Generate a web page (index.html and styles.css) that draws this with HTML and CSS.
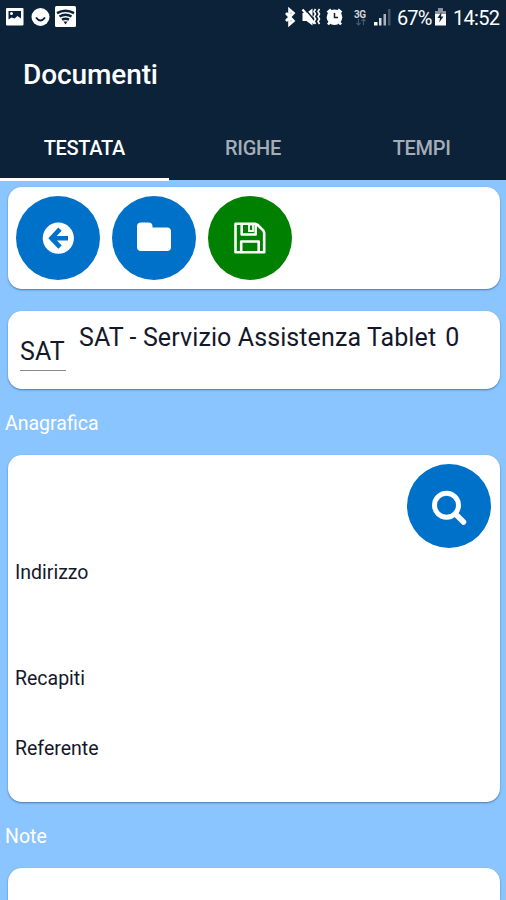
FILE: index.html
```html
<!DOCTYPE html>
<html lang="it">
    <head>
        <meta charset="utf-8">
        <title>Documenti</title>
        <link rel="stylesheet" href="styles.css">
    </head>
    <body>
        <div class="header">
            <!-- barra di stato -->
            <div class="status">
                <svg class="status-left" width="80" height="34" viewBox="0 0 80 34">
                    <path fill="#fff" fill-rule="evenodd" d="M8 8h14.500q1 0 1 1v15.500q0 1-1 1H7q-1 0-1-1V9q0-1 1-1zM8.500 11v8.500l3-2 3 1 3-2.500 3.500 2.500V11z"/>
                    <circle cx="11.500" cy="13.500" r="1.500" fill="#fff"/>
                    <circle cx="40.500" cy="17" r="9" fill="#fff"/>
                    <path d="M36 17.500q4.500 6 9 0" fill="none" stroke="#0b2239" stroke-width="2"/>
                    <rect x="55" y="6" width="21" height="21" rx="1.500" fill="#fff"/>
                    <g fill="none" stroke="#0b2239" stroke-width="2.500">
                        <path d="M57 13.200q8.500-5 17 0"/>
                        <path d="M59.500 16.500q6-3.500 12 0"/>
                        <path d="M62 19.700q3.500-2 7 0"/>
                    </g>
                    <path d="M63.500 21.500h4l-2 3z" fill="#0b2239"/>
                </svg>
                <svg width="112" height="34" viewBox="282 0 112 34">
                    <path d="M287 13l7.500 8-4 3.500v-15l4 3.500-7.500 8" fill="none" stroke="#fff" stroke-width="2.600"/>
                    <path d="M303.500 13h4l6-4.500v17l-6-4.500h-4z" fill="#fff"/>
                    <path d="M305.500 8.500l12 14" stroke="#0b2239" stroke-width="1.500"/>
                    <path d="M303.500 9.500l12 14" stroke="#fff" stroke-width="2.300"/>
                    <path d="M316.500 9l-1.500 2.500 1.500 2.500-1.500 2.500 1.500 2.500-1.500 2.500 1.500 2.500M320.500 9l-1.500 2.500 1.500 2.500-1.500 2.500 1.500 2.500-1.500 2.500 1.500 2.500" fill="none" stroke="#fff" stroke-width="1.600"/>
                    <circle cx="335.500" cy="17.200" r="7.800" fill="#fff"/>
                    <path d="M328.500 12.500l3.500-3M342.500 12.500l-3.500-3M331 22l-2 2.500M340 22l2 2.500" stroke="#fff" stroke-width="2.600"/>
                    <path d="M335.500 13v4.500h3.500" fill="none" stroke="#0b2239" stroke-width="1.500"/>
                    <text x="355" y="17.500" class="net">3G</text>
                    <path d="M359.500 19v6m-2-2l2 2 2-2M364.500 25v-6m-2 2l2-2 2 2" fill="none" stroke="#4b5a6b" stroke-width="1.200"/>
                    <path d="M375 22h3.500v3.500H375z" fill="#fff"/>
                    <path d="M380 18h2.500v7.500H380z" fill="#d5d9de"/>
                    <path d="M384.500 14h2.500v11.500h-2.500z" fill="#aab2bb"/>
                    <path d="M389 9h2.500v16.500H389z" fill="#43566a"/>
                </svg>
                <span class="percent">67%</span>
                <svg class="battery" width="13" height="34" viewBox="0 0 13 34">
                    <path d="M1 11h3V8.500h5V11h3v14.500H1z" fill="#fff"/>
                    <path d="M1 11h3V8.500h5V11h3v3H1z" fill="#8b96a2"/>
                    <path d="M7.500 12l-4 6H6l-.8 4.500 4.300-6H7z" fill="#0b2239"/>
                </svg>
                <span class="clock">14:52</span>
            </div>
            <h1>Documenti</h1>
            <div class="tabs">
                <a class="tab active">TESTATA</a>
                <a class="tab">RIGHE</a>
                <a class="tab">TEMPI</a>
            </div>
        </div>

        <div class="content">
            <div class="card toolbar">
                <button class="round">
                    <svg width="84" height="84" viewBox="0 0 84 84">
                        <circle cx="42.300" cy="42.200" r="15.600" fill="#fff"/>
                        <path d="M52 42.200H36M44 33.200l-8.500 9 8.500 9" fill="none" stroke="#0071c8" stroke-width="4.600"/>
                    </svg>
                </button>
                <button class="round">
                    <svg width="84" height="84" viewBox="0 0 84 84">
                        <path d="M29 26.500h7.500q4 0 4 4v1h14.500q4 0 4 4v15.500q0 4-4 4H29q-4 0-4-4V30.500q0-4 4-4z" fill="#fff"/>
                    </svg>
                </button>
                <button class="round save">
                    <svg width="84" height="84" viewBox="0 0 84 84">
                        <path d="M27.500 27.800h19.500q1.500 0 2.700 1.200l5.200 5.200q1.300 1.300 1.300 3V56.200H27.500zM33.200 56V45.500h17.500V56M33.700 28v10.500h14v-10.500" fill="none" stroke="#fff" stroke-width="2.600" stroke-linejoin="round"/>
                        <path d="M41 28.500h4v6.500h-4z" fill="none" stroke="#fff" stroke-width="1.800"/>
                    </svg>
                </button>
            </div>

            <div class="card doc">
                <span class="doc-code">SAT</span>
                <span class="doc-name">SAT - Servizio Assistenza Tablet</span>
                <span class="doc-number">0</span>
            </div>

            <div class="section">Anagrafica</div>
            <div class="card customer">
                <button class="round search">
                    <svg width="84" height="84" viewBox="0 0 84 84">
                        <circle cx="39.500" cy="41.200" r="12" fill="none" stroke="#fff" stroke-width="5"/>
                        <path d="M48.500 50l8 8" stroke="#fff" stroke-width="5.500" stroke-linecap="round"/>
                    </svg>
                </button>
                <div class="field address">Indirizzo</div>
                <div class="field contacts">Recapiti</div>
                <div class="field">Referente</div>
            </div>

            <div class="section">Note</div>
            <div class="card notes"></div>
        </div>
    </body>
</html>
```
FILE: styles.css
```css
*{
    margin: 0;
    padding: 0;
    box-sizing: border-box;
}
body{
    height: 900px;
    overflow: hidden;
    background-color: #8bc5ff;
    font-family: Roboto, "Liberation Sans", sans-serif;
    color: #15172b;
}
svg{
    display: block;
}
/* header */
.header{
    height: 180px;
    background-color: #0b2239;
    color: #fff;
}
.status{
    display: flex;
    height: 34px;
    line-height: 36px;
    font-size: 20px;
}
.status-left{
    margin-right: auto;
}
.net{
    font-size: 10px;
    font-weight: bold;
    letter-spacing: -0.5px;
    fill: #cfd5db;
}
.percent{
    width: 34px;
    margin-left: 4px;
    letter-spacing: -0.9px;
}
.battery{
    margin: 0 6px 0 3px;
}
.clock{
    width: 53px;
    letter-spacing: -0.7px;
}
h1{
    height: 81px;
    padding-left: 23px;
    line-height: 81px;
    font-size: 28px;
    font-weight: 500;
    letter-spacing: -0.1px;
}
.tabs{
    display: flex;
    height: 66px;
}
.tab{
    flex: 1;
    height: 65px;
    line-height: 66px;
    text-align: center;
    font-size: 20px;
    font-weight: 500;
    letter-spacing: -0.3px;
    color: #a6adb6;
}
.active{
    height: 66px;
    color: #fff;
    border-bottom: 3px solid #fff;
}
/* cards */
.content{
    padding: 7px 6px 0 8px;
}
.card{
    background-color: #fff;
    border-radius: 14px;
    box-shadow: 0 1px 2px rgba(30, 70, 110, 0.6);
}
.toolbar{
    display: flex;
    gap: 12px;
    height: 102px;
    padding: 9px 8px;
}
.round{
    width: 84px;
    height: 84px;
    border: none;
    border-radius: 50%;
    background-color: #0071c8;
}
.save{
    margin-left: -0.5px;
    background-color: #008000;
}
.doc{
    display: flex;
    align-items: flex-start;
    height: 78px;
    margin-top: 22px;
    padding: 10px 12px;
    font-size: 25px;
    line-height: 33px;
    letter-spacing: 0.1px;
}
.doc-code{
    width: 46px;
    height: 50px;
    padding-top: 14px;
    border-bottom: 1px solid #8d8789;
}
.doc-name{
    margin-left: 13px;
}
.doc-number{
    margin-left: 9px;
}
.section{
    height: 66px;
    margin-left: -3px;
    line-height: 70px;
    font-size: 19.500px;
    color: #fff;
}
.customer{
    display: flex;
    flex-direction: column;
    height: 347px;
    padding: 9px 9px 0 7px;
}
.search{
    align-self: flex-end;
}
.field{
    line-height: 24px;
    font-size: 19.500px;
}
.address{
    margin: 13px 0 82px;
}
.contacts{
    margin-bottom: 46px;
}
.notes{
    height: 32px;
    border-radius: 14px 14px 0 0;
}
```
